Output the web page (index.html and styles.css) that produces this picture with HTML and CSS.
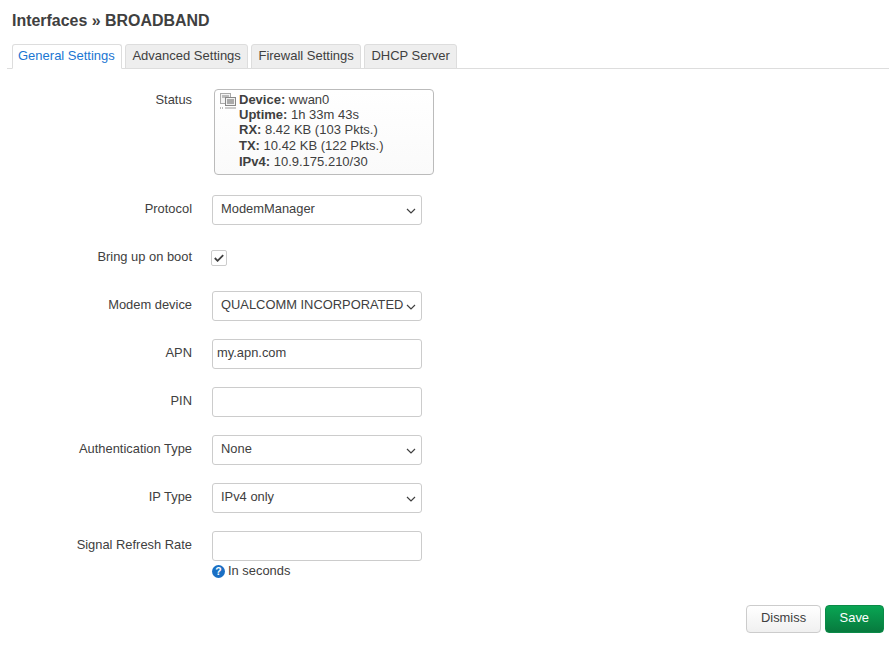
FILE: index.html
```html
<!DOCTYPE html>
<html lang="en">
<head>
<meta charset="utf-8">
<title>Interfaces » BROADBAND</title>
<link rel="stylesheet" href="styles.css">
</head>
<body>
<main class="page">
  <h2 class="title">Interfaces » BROADBAND</h2>
  <ul class="tabs">
    <li class="tab active">General Settings</li>
    <li class="tab">Advanced Settings</li>
    <li class="tab">Firewall Settings</li>
    <li class="tab">DHCP Server</li>
  </ul>
  <form class="form">
    <div class="row row-status">
      <label class="label">Status</label>
      <div class="status">
        <svg class="status-icon" width="16" height="16" viewBox="0 0 16 16" aria-hidden="true">
          <rect x="0.5" y="0.5" width="10" height="10" fill="#f4f4f4" stroke="#aaa"/>
          <rect x="2" y="2" width="7" height="3" fill="#bbb"/>
          <rect x="5.5" y="4.5" width="10" height="8" fill="#f2f2f2" stroke="#888"/>
          <rect x="7" y="6" width="7" height="5" fill="#aaa"/>
          <rect x="5" y="14" width="11" height="2" fill="#ccc"/>
          <rect x="0" y="14" width="1" height="2" fill="#bbb"/>
          <rect x="2" y="14" width="1" height="2" fill="#bbb"/>
        </svg>
        <div class="status-lines">
          <div class="status-line"><b>Device:</b> wwan0</div>
          <div class="status-line"><b>Uptime:</b> 1h 33m 43s</div>
          <div class="status-line"><b>RX:</b> 8.42 KB (103 Pkts.)</div>
          <div class="status-line status-line-gap"><b>TX:</b> 10.42 KB (122 Pkts.)</div>
          <div class="status-line status-line-gap"><b>IPv4:</b> 10.9.175.210/30</div>
        </div>
      </div>
    </div>
    <div class="row">
      <label class="label">Protocol</label>
      <select class="control select"><option>ModemManager</option></select>
    </div>
    <div class="row row-check">
      <label class="label">Bring up on boot</label>
      <span class="check">
        <svg width="10" height="8" viewBox="0 0 10 8" aria-hidden="true"><path d="M0.8 4 3.6 6.8 9.2 1.2" fill="none" stroke="#404040" stroke-width="1.8"/></svg>
      </span>
    </div>
    <div class="row">
      <label class="label">Modem device</label>
      <select class="control select"><option>QUALCOMM INCORPORATED</option></select>
    </div>
    <div class="row">
      <label class="label">APN</label>
      <input class="control text" type="text" value="my.apn.com">
    </div>
    <div class="row">
      <label class="label">PIN</label>
      <input class="control text" type="text">
    </div>
    <div class="row">
      <label class="label">Authentication Type</label>
      <select class="control select"><option>None</option></select>
    </div>
    <div class="row">
      <label class="label">IP Type</label>
      <select class="control select"><option>IPv4 only</option></select>
    </div>
    <div class="row row-last">
      <label class="label">Signal Refresh Rate</label>
      <div class="field">
        <input class="control text" type="text">
        <div class="help"><span class="help-icon">?</span>In seconds</div>
      </div>
    </div>
  </form>
  <div class="actions">
    <button class="btn" type="button">Dismiss</button>
    <button class="btn btn-save" type="button">Save</button>
  </div>
</main>
</body>
</html>
```
FILE: styles.css
```css
* { box-sizing: border-box; }
html, body { margin: 0; padding: 0; background: #fff; }
body {
  font-family: "Liberation Sans", Arial, sans-serif;
  font-size: 12.9px;
  line-height: 18px;
  color: #404040;
}
.page { padding: 0 7px 0 7px; }
.title {
  margin: 0;
  padding: 10px 0 0 5px;
  font-size: 15.95px;
  line-height: 22px;
  font-weight: bold;
  color: #404040;
}
.tabs {
  display: flex;
  gap: 3.6px;
  list-style: none;
  margin: 12px 0 0;
  padding: 0 0 0 5px;
  height: 25px;
  border-bottom: 1px solid #ddd;
}
.tab {
  height: 25px;
  padding: 0 6px;
  font-size: 13px;
  line-height: 21px;
  background: #eee;
  border: 1px solid #ddd;
  border-radius: 3px 3px 0 0;
}
.tab.active {
  padding: 0 6px 0 5px;
  color: #1a76d2;
  background: #fff;
  border-bottom-color: #fff;
}
.form { padding-top: 20px; }
.row {
  display: grid;
  grid-template-columns: 185px 210px;
  column-gap: 20px;
  margin-bottom: 18px;
  align-items: start;
}
.row-status { grid-template-columns: 185px 220px; column-gap: 22px; margin-bottom: 20px; }
.row-check { margin-bottom: 25px; height: 16px; margin-top: 25px; }
.label {
  text-align: right;
  padding-top: 5px;
}
.row-status .label { padding-top: 2px; }
.row-check .label { padding-top: 0; margin-top: -2px; }
.status {
  display: flex;
  height: 86px;
  padding: 2px 4px;
  border: 1px solid #bbb;
  border-radius: 4px;
  background: linear-gradient(#fff, #fafafa);
  font-size: 13px;
}
.status-icon { flex: none; margin: 1px 3px 0 1px; }
.status-line { height: 15px; line-height: 15px; }
.status-line-gap { margin-top: 1px; }
.status-line b { font-weight: bold; }
.control {
  display: block;
  width: 210px;
  height: 30px;
  border: 1px solid #ccc;
  border-radius: 3px;
  background-color: #fff;
  color: #404040;
  font: inherit;
  padding: 0 4px;
}
.select {
  appearance: none;
  -webkit-appearance: none;
  padding: 0 16px 2px 8px;
  background-image: url("data:image/svg+xml,%3Csvg xmlns='http://www.w3.org/2000/svg' width='10' height='6' viewBox='0 0 10 6'%3E%3Cpath d='M1 1l4 4 4-4' fill='none' stroke='%23404040' stroke-width='1.2'/%3E%3C/svg%3E");
  background-repeat: no-repeat;
  background-position: right 5px top 12px;
  outline: none;
}
.text { padding: 0 4px 4px; }
.check {
  display: flex;
  align-items: center;
  justify-content: center;
  width: 16px;
  height: 16px;
  margin-left: -1px;
  border: 1px solid #ccc;
  border-radius: 2px;
  background: #fff;
}
.field { width: 210px; }
.help {
  display: flex;
  align-items: center;
  gap: 3px;
  margin-top: 1px;
}
.help-icon {
  display: inline-flex;
  align-items: center;
  justify-content: center;
  width: 13px;
  height: 13px;
  border-radius: 50%;
  background: #1a6fc4;
  color: #fff;
  font-size: 10.5px;
  font-weight: bold;
  line-height: 13px;
}
.actions {
  display: flex;
  justify-content: flex-end;
  gap: 4px;
  margin-top: 25px;
  padding-right: 5px;
  padding-bottom: 12px;
}
.btn {
  height: 28px;
  padding: 0 13.5px 3px;
  border: 1px solid #ccc;
  border-radius: 4px;
  background: linear-gradient(#fff, #f0f0f0);
  color: #404040;
  font: inherit;
}
.btn-save {
  padding: 0 14px 3px;
  border-color: #0b8a48;
  background: linear-gradient(#09a553, #077a3e);
  color: #fff;
}
```
